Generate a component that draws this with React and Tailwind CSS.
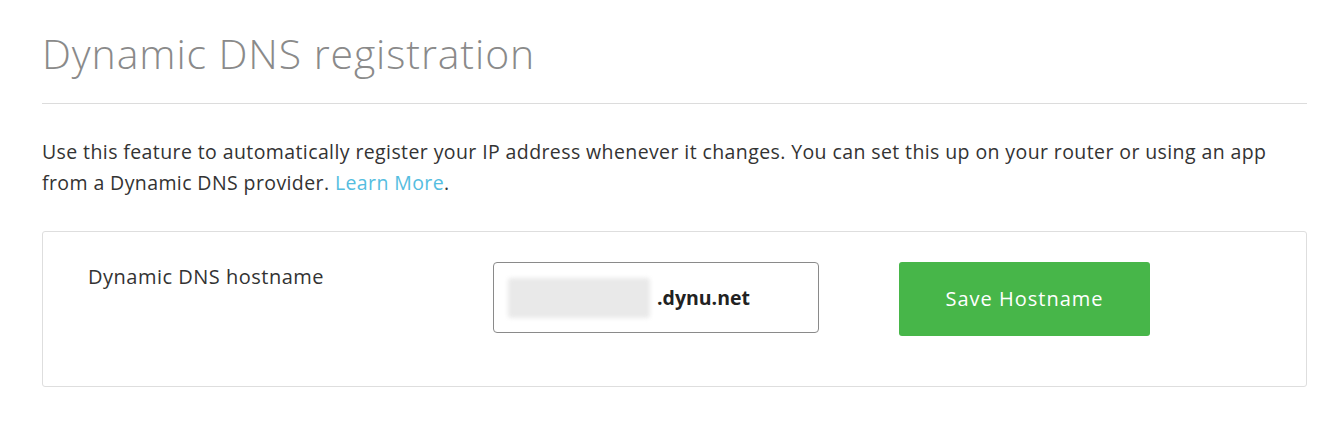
import React from 'react';

export default function App() {
  return (
    <div className="min-h-[432px] bg-white px-[42px] pt-[26px] font-['Open_Sans',sans-serif]">
      <h1 className="text-[41px] font-light leading-[54px] tracking-[0.9px] text-[#8a8a8a]">Dynamic DNS registration</h1>
      <div className="mt-[23px] mr-[-9px] h-px bg-[#dcdcdc]" />

      <p className="mt-[32px] text-[19.5px] leading-[31px] tracking-[0.4px] text-[#333]">
        Use this feature to automatically register your IP address whenever it changes. You can set this up on your router or using an app
        from a Dynamic DNS provider. <a href="#" className="text-[#54bde0]">Learn More</a>.
      </p>

      {/* Hostname form */}
      <div className="mt-[33px] mr-[-9px] flex h-[156px] items-start rounded-[3px] border border-[#dedede] pt-[30px]">
        <label className="ml-[45px] w-[405px] text-[20px] leading-[30px] tracking-[0.5px] text-[#333]">Dynamic DNS hostname</label>
        <div className="flex h-[71px] w-[326px] items-center rounded-[4px] border border-[#8a8a8a] pl-[14px]">
          <div className="h-[40px] w-[142px] rounded-[3px] bg-[#e9e9e9] blur-[2px]" />
          <span className="ml-[7px] text-[19.5px] font-bold text-[#222]">.dynu.net</span>
        </div>
        <button className="ml-[80px] h-[74px] w-[251px] rounded-[3px] bg-[#47b649] text-[20px] tracking-[1px] text-white">
          Save Hostname
        </button>
      </div>
    </div>
  );
}
